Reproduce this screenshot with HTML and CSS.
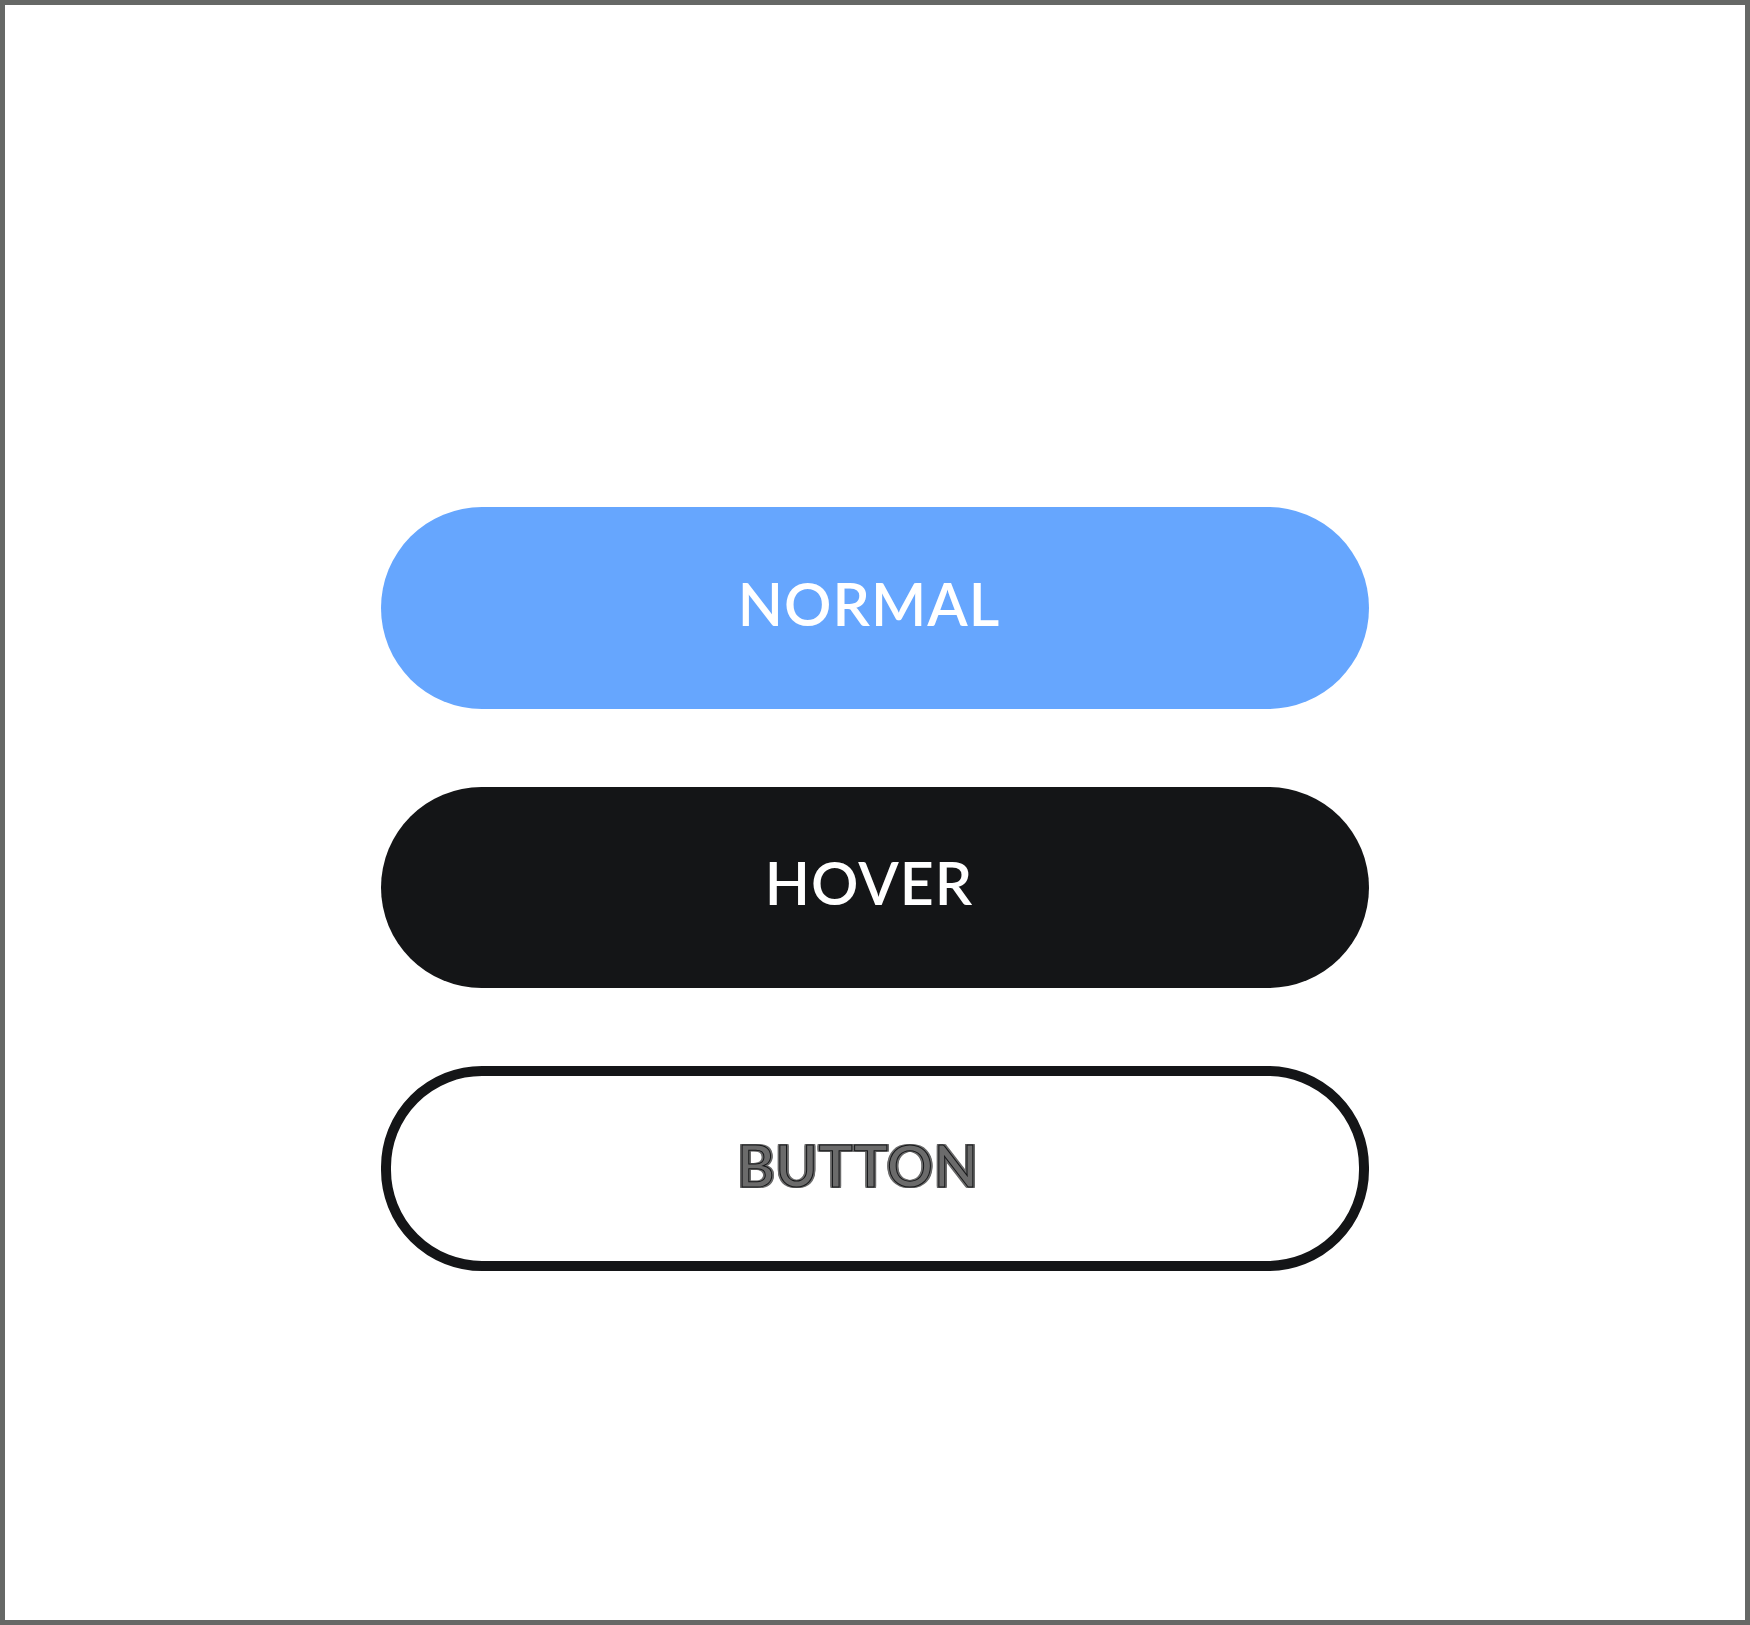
FILE: index.html
```html
<!DOCTYPE html>
<html>
<head>
<meta charset="utf-8">
<link rel="stylesheet" href="styles.css">
</head>
<body>
<div class="frame">
  <div class="stack">
    <button class="btn btn-normal">NORMAL</button>
    <button class="btn btn-hover">HOVER</button>
    <button class="btn btn-outline"><span class="outline-text">BUTTON</span></button>
  </div>
</div>
</body>
</html>
```

FILE: styles.css
```css
html, body {
  margin: 0;
  padding: 0;
  background: #ffffff;
}
.frame {
  box-sizing: border-box;
  width: 1750px;
  height: 1625px;
  border: 5px solid #666866;
  background: #ffffff;
}
.stack {
  display: flex;
  flex-direction: column;
  align-items: center;
  gap: 78px;
  padding-top: 502px;
}
.btn {
  box-sizing: border-box;
  width: 988px;
  height: 202px;
  border-radius: 101px;
  border: none;
  font-family: Lato, "Open Sans", sans-serif;
  font-size: 59px;
  font-weight: 600;
  letter-spacing: 1px;
  color: #ffffff;
  display: flex;
  align-items: center;
  justify-content: center;
  padding: 0 12px 10px 0;
  margin: 0;
}
.btn-normal {
  background: #66a6fe;
}
.btn-hover {
  background: #141517;
  height: 201px;
}
.btn-outline {
  background: #ffffff;
  border: 10px solid #141517;
  height: 205px;
  padding: 0 34px 8px 0;
}
.outline-text {
  font-size: 57px;
  color: #6b6b6b;
  -webkit-text-stroke: 1px #141517;
  text-shadow:
    2px 0 0 #6b6b6b, -2px 0 0 #6b6b6b, 0 1px 0 #6b6b6b, 0 -1px 0 #6b6b6b,
    2px 1px 0 #6b6b6b, -2px -1px 0 #6b6b6b, 2px -1px 0 #6b6b6b, -2px 1px 0 #6b6b6b;
}
```
